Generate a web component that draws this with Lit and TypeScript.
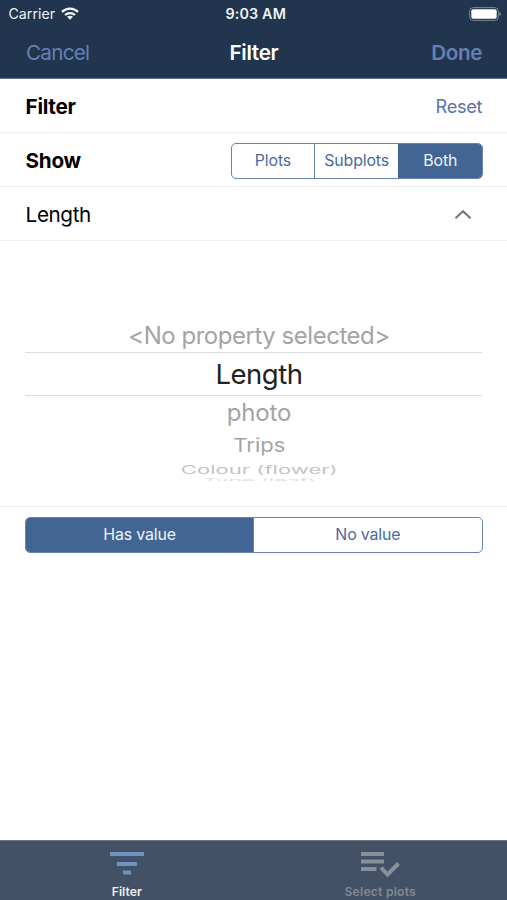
import { LitElement, html, css } from "lit";
import { customElement, property } from "lit/decorators.js";
import { classMap } from "lit/directives/class-map.js";

@customElement("segmented-control")
class SegmentedControl extends LitElement {
  @property({ attribute: false }) options: string[] = [];
  @property({ type: Number }) selected = 0;

  static styles = css`
    :host { display: block; height: 36px; }
    .track {
      display: flex; box-sizing: border-box; height: 100%;
      border: 1.3px solid #6583b3; border-radius: 5px; overflow: hidden; background: #fff;
    }
    .segment {
      flex: 1 1 0; display: flex; align-items: center; justify-content: center;
      font-size: 15.9px; letter-spacing: -0.15px; color: #4a6a9e;
    }
    .segment + .segment { border-left: 1px solid #6583b3; }
    .segment.on { background: #426594; color: #edf3fb; border-color: #426594; }
  `;

  render() {
    return html`<div class="track">
      ${this.options.map((o, i) => html`<div class=${classMap({ segment: true, on: i === this.selected })}>${o}</div>`)}
    </div>`;
  }
}

@customElement("app-root")
class AppRoot extends LitElement {
  static styles = css`
    :host {
      display: flex; flex-direction: column; height: 900px; overflow: hidden; background: #fff;
      font-family: Inter, "Liberation Sans", sans-serif; color: #000; white-space: nowrap;
    }
    svg { display: block; }
    .top { background: #22354e; height: 79px; box-sizing: border-box; border-bottom: 1px solid #5b7690; flex: none; }
    .status { display: grid; grid-template-columns: 1fr auto 1fr; height: 27px; align-items: center; color: #eef2f5; padding: 0 6px 0 8.500px; font-size: 14.2px; }
    .carrier { display: flex; align-items: center; gap: 6px; }
    .time { font-weight: 600; font-size: 14.3px; letter-spacing: 0.15px; padding-left: 2px; }
    .battery { justify-self: end; }
    .nav { display: grid; grid-template-columns: 1fr auto 1fr; height: 51px; align-items: center; padding: 0 25px 0 26px; font-size: 20.7px; letter-spacing: -0.4px; color: #6480b5; }
    .cancel { letter-spacing: -0.75px; }
    .title { color: #fff; font-weight: 600; letter-spacing: -0.3px; }
    .done { text-align: right; font-weight: 600; }
    .row { display: flex; align-items: center; justify-content: space-between; height: 54px; box-sizing: border-box; border-bottom: 1px solid #efefef; padding: 2px 25px 0 25.6px; font-size: 20.7px; letter-spacing: -0.4px; flex: none; }
    .strong { font-weight: 700; letter-spacing: -0.3px; }
    .reset { color: #5676aa; font-size: 18.3px; padding-bottom: 1px; }
    .show { width: 252px; margin-right: -0.6px; }
    .chevron { margin-right: 10px; }
    .picker { height: 266px; box-sizing: border-box; border-bottom: 1px solid #efefef; padding: 79px 25px 0; display: flex; flex-direction: column; flex: none; }
    .item { display: flex; align-items: center; justify-content: center; flex: none; padding-left: 11px; color: #a4a4a4; font-size: 24px; }
    .item span { display: block; line-height: 30px; flex: none; }
    .before { height: 32px; letter-spacing: -0.47px; }
    .current { height: 44px; box-sizing: border-box; border: solid #dcdcdc; border-width: 1px 0; color: #222; font-size: 27.5px; letter-spacing: -0.5px; }
    .near { height: 34px; letter-spacing: -0.2px; }
    .mid { height: 32px; }
    .mid span { transform: scale(0.92, 0.78); }
    .far { height: 15px; color: #c3c3c3; }
    .far span { transform: scale(0.92, 0.46); }
    .edge { height: 4px; overflow: hidden; color: #dedede; align-items: flex-start; }
    .edge span { transform: scale(0.92, 0.25); transform-origin: 50% 0; }
    .value { padding: 9.500px 24.500px 0 25px; flex: 1; }
    .tabs { display: flex; height: 60px; background: #425165; flex: none; box-sizing: border-box; border-top: 1px solid #687587; }
    .tab { flex: 1; display: flex; flex-direction: column; align-items: center; padding-top: 7px; font-size: 12.2px; font-weight: 600; color: #eceff3; }
    .tab.off { color: #818993; letter-spacing: 0.2px; }
    .tab svg { margin-bottom: 4px; }
  `;

  render() {
    return html`
      <header class="top">
        <div class="status">
          <div class="carrier">Carrier
            <svg width="18" height="13" viewBox="0 0 18 13" fill="none" stroke="#f4f6f8" stroke-width="2.3">
              <path d="M1 4.8C5.5.5 12.5.5 17 4.8M4 8C6.8 5.4 11.2 5.4 14 8" />
              <path d="M9 12.8 6 9.8C7.7 8.4 10.3 8.4 12 9.8Z" fill="#f4f6f8" stroke="none" />
            </svg>
          </div>
          <div class="time">9:03 AM</div>
          <svg class="battery" width="32" height="14" viewBox="0 0 32 14">
            <rect x=".7" y=".6" width="28.6" height="12.8" rx="3.6" fill="none" stroke="#7b8795" />
            <rect x="2.3" y="2.2" width="25.4" height="9.6" rx="2" fill="#fff" />
            <path d="M30.4 5v4q1.5-.6 1.5-2t-1.5-2Z" fill="#8893a0" />
          </svg>
        </div>
        <div class="nav"><div class="cancel">Cancel</div><div class="title">Filter</div><div class="done">Done</div></div>
      </header>
      <div class="row"><div class="strong">Filter</div><div class="reset">Reset</div></div>
      <div class="row"><div class="strong">Show</div>
        <segmented-control class="show" .options=${["Plots", "Subplots", "Both"]} .selected=${2}></segmented-control>
      </div>
      <div class="row"><div>Length</div>
        <svg class="chevron" width="18" height="11" viewBox="0 0 18 11" fill="none" stroke="#7a7a7a" stroke-width="2.2"><path d="m1.5 9.3 7.5-7 7.5 7" /></svg>
      </div>
      <div class="picker">
        <div class="item before"><span>&lt;No property selected&gt;</span></div>
        <div class="item current"><span>Length</span></div>
        <div class="item near"><span>photo</span></div>
        <div class="item mid"><span>Trips</span></div>
        <div class="item far"><span>Colour (flower)</span></div>
        <div class="item edge"><span>Type (leaf)</span></div>
      </div>
      <div class="value"><segmented-control .options=${["Has value", "No value"]} .selected=${0}></segmented-control></div>
      <footer class="tabs">
        <div class="tab">
          <svg width="36" height="32" viewBox="0 0 36 32" fill="#7191c6"><path d="M1 4h34v4H1zM8 14h20v4H8zM14 22.5h8v4h-8z" /></svg>
          Filter
        </div>
        <div class="tab off">
          <svg width="40" height="32" viewBox="0 0 40 32" fill="#88909a"><path d="M1 4h23v4H1zM1 11.5h23v4H1zM1 19h15.500v4H1z" /><path d="m21 19.500 6.500 7L38.500 15.500" fill="none" stroke="#88909a" stroke-width="4" /></svg>
          Select plots
        </div>
      </footer>
    `;
  }
}
